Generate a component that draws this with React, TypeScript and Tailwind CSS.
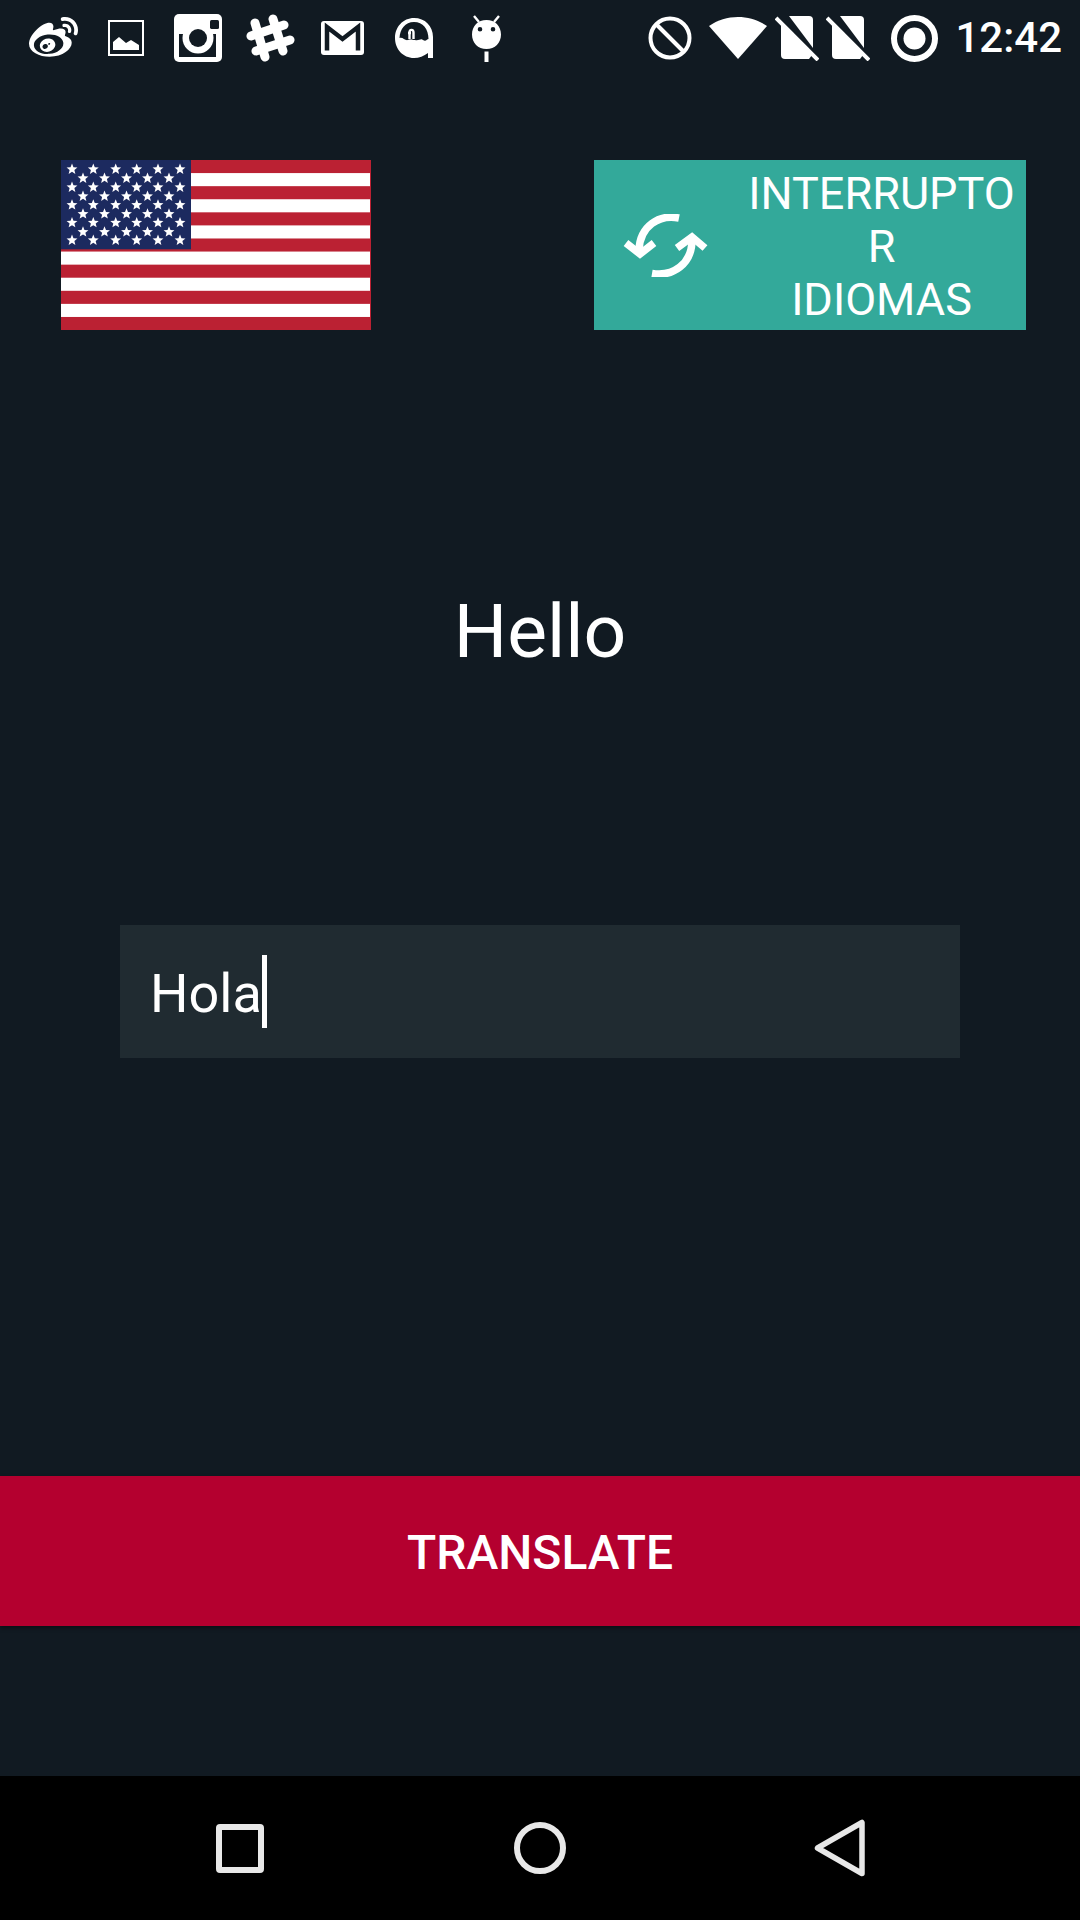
import { FaWeibo } from "react-icons/fa";

const FONT = "font-['Roboto','Liberation_Sans',sans-serif]";
const BG = "#111a22";

// Star rows of the canton, alternating 6 and 5 stars.
const STAR_ROWS = [9.3, 18.3, 27.3, 36.3, 45, 54, 62.7, 72, 80.3];
const STAR_LONG = [11, 32.3, 54.7, 75.7, 97, 119];
const STAR_SHORT = [22, 43.5, 65.5, 86.5, 108];

function starPoints(cx: number, cy: number, r: number) {
  const pts: string[] = [];
  for (let i = 0; i < 10; i++) {
    const rad = i % 2 === 0 ? r : r * 0.44;
    const a = (Math.PI / 5) * i - Math.PI / 2;
    pts.push(`${(cx + rad * Math.cos(a)).toFixed(2)},${(cy + rad * Math.sin(a)).toFixed(2)}`);
  }
  return pts.join(" ");
}

function UsFlag() {
  return (
    <svg width="310" height="170" viewBox="0 0 310 170" className="block">
      <defs>
        <filter id="soft" x="-5%" y="-5%" width="110%" height="110%">
          <feGaussianBlur stdDeviation="0.7" />
        </filter>
        <clipPath id="flagClip">
          <rect width="310" height="170" />
        </clipPath>
      </defs>
      <g clipPath="url(#flagClip)">
        <rect width="310" height="170" fill="#bb2133" />
        <g filter="url(#soft)">
          {[1, 3, 5, 7, 9, 11].map((i) => (
            <rect key={i} x="-4" y={i * 13.08} width="313" height="13.08" fill="#ffffff" />
          ))}
          <rect x="-4" y="-4" width="134" height="93.3" fill="#1f2a5e" />
          {STAR_ROWS.map((y, row) =>
            (row % 2 === 0 ? STAR_LONG : STAR_SHORT).map((x) => (
              <polygon key={`${row}-${x}`} points={starPoints(x, y, 5.7)} fill="#ffffff" />
            )),
          )}
        </g>
      </g>
    </svg>
  );
}

function SyncIcon() {
  return (
    <svg width="85" height="63" viewBox="0 0 85 63" fill="none" stroke="#ffffff" strokeWidth="7.5">
      <path d="M56 4C36 0 17 12 16 36" />
      <path d="M3 29L17 40L31 29" />
      <path d="M29 59.5C50 63 69 50 69 26" />
      <path d="M54 34L69 23L82 34" />
    </svg>
  );
}

function GalleryIcon() {
  return (
    <svg width="36" height="36" viewBox="0 0 36 36" fill="none">
      <rect x="1" y="1" width="34" height="34" stroke="#fff" strokeWidth="2" />
      <path d="M5 30V22L11 17L18 23L23 20L31 25V30Z" fill="#fff" />
    </svg>
  );
}

function InstagramIcon() {
  return (
    <svg width="48" height="48" viewBox="0 0 48 48">
      <rect width="48" height="48" rx="5" fill="#fff" />
      <rect x="36" y="6" width="9" height="9" rx="1.5" fill={BG} />
      <rect x="5" y="20" width="37" height="23" fill={BG} />
      <circle cx="24" cy="24" r="15.5" fill="#fff" />
      <circle cx="24" cy="24" r="9" fill={BG} />
    </svg>
  );
}

function SlackIcon() {
  return (
    <svg width="49" height="48" viewBox="0 0 49 48" stroke="#fff" strokeWidth="9" strokeLinecap="round">
      <path d="M9 9L19 43M27 5L37 37" />
      <path d="M5 22L38 11M10 37L44 26" />
    </svg>
  );
}

function GmailIcon() {
  return (
    <svg width="43" height="34" viewBox="0 0 43 34">
      <rect width="43" height="34" rx="3" fill="#fff" />
      <path d="M6 29.5V6L21.5 18L37 6V29.5" fill="none" stroke={BG} strokeWidth="4.5" />
    </svg>
  );
}

function GhostIcon() {
  return (
    <svg width="38" height="40" viewBox="0 0 38 40">
      <path
        fill="#fff"
        fillRule="evenodd"
        d="M19 0C30 0 38 8 38 19V40H33V35C29 38 24 40 19 40C8 40 0 31 0 20C0 9 8 0 19 0ZM19 4C10 4 5 11 4.5 20C8 19 10 23 13 22C16 21 17 22 20 22C24 23 26 20 28 22C31 24 32 21 33.5 21C33.5 11 28 4 19 4Z"
      />
      <path d="M14.5 21V14.5C14.5 11 18.5 11 18.5 14.5V21M13 15H16" fill="none" stroke="#fff" strokeWidth="2.4" />
    </svg>
  );
}

function AndroidIcon() {
  return (
    <svg width="31" height="47" viewBox="0 0 31 47">
      <path d="M3 1L8 7M28 1L23 7" stroke="#fff" strokeWidth="2.4" />
      <path
        fill="#fff"
        fillRule="evenodd"
        d="M15.5 5C24 5 30 11 30 19.5C30 28 24 34 15.5 34C7 34 1 28 1 19.5C1 11 7 5 15.5 5ZM9 12A2.3 2.3 0 1 0 9 16.6A2.3 2.3 0 1 0 9 12ZM22 12A2.3 2.3 0 1 0 22 16.6A2.3 2.3 0 1 0 22 12Z"
      />
      <rect x="13.5" y="36.5" width="4" height="10.5" fill="#fff" />
    </svg>
  );
}

function BlockedIcon() {
  return (
    <svg width="44" height="44" viewBox="0 0 44 44" fill="none" stroke="#fff" strokeWidth="4">
      <circle cx="22" cy="22" r="19.5" />
      <path d="M8 8L36 36" />
    </svg>
  );
}

function WifiIcon() {
  return (
    <svg width="58" height="42" viewBox="0 0 58 42">
      <path fill="#fff" d="M0 9C17 -3 41 -3 58 9L29 42Z" />
    </svg>
  );
}

function SimOffIcon() {
  return (
    <svg width="44" height="46" viewBox="0 0 44 46">
      <path fill="#fff" d="M14 1H34A4 4 0 0 1 38 5V33Z" />
      <path fill="#fff" d="M6 9L37 40L34 44H10A4 4 0 0 1 6 40Z" />
      <path d="M1 3L43 45" stroke="#fff" strokeWidth="4" />
    </svg>
  );
}

function TargetIcon() {
  return (
    <svg width="47" height="47" viewBox="0 0 47 47" fill="none">
      <circle cx="23.5" cy="23.5" r="20.5" stroke="#fff" strokeWidth="6" />
      <circle cx="23.5" cy="23.5" r="11" fill="#fff" />
    </svg>
  );
}

function StatusBar() {
  return (
    <div className="flex h-[76px] shrink-0 items-center justify-between pl-[29px] pr-[18px]">
      <div className="flex items-center">
        <FaWeibo className="h-[49px] w-[49px] text-white" />
        <div className="ml-[30px]"><GalleryIcon /></div>
        <div className="ml-[30px]"><InstagramIcon /></div>
        <div className="ml-[24px]"><SlackIcon /></div>
        <div className="ml-[26px]"><GmailIcon /></div>
        <div className="ml-[31px]"><GhostIcon /></div>
        <div className="ml-[38px]"><AndroidIcon /></div>
      </div>
      <div className="flex items-center">
        <BlockedIcon />
        <div className="ml-[17px]"><WifiIcon /></div>
        <div className="ml-[8px]"><SimOffIcon /></div>
        <div className="ml-[7px]"><SimOffIcon /></div>
        <div className="ml-[21px]"><TargetIcon /></div>
        <span className="ml-[17px] text-[42px] font-medium leading-none text-white">12:42</span>
      </div>
    </div>
  );
}

function NavBar() {
  return (
    <div className="flex h-[144px] shrink-0 items-center bg-black pl-[216px]">
      <div className="h-[49px] w-[48px] rounded-[4px] border-[6px] border-[#e8e8e8]" />
      <div className="ml-[250px] h-[52px] w-[52px] rounded-full border-[6px] border-[#e8e8e8]" />
      <svg width="52" height="58" viewBox="0 0 52 58" fill="none" className="ml-[248px]">
        <path d="M48 3.5V54.5L3.5 29Z" stroke="#e8e8e8" strokeWidth="5.5" strokeLinejoin="round" />
      </svg>
    </div>
  );
}

export default function App() {
  return (
    <div className={`${FONT} flex h-[1920px] w-[1080px] flex-col bg-[#111a22] text-white`}>
      <StatusBar />

      <div className="flex flex-1 flex-col">
        {/* Flag + language switch */}
        <div className="mt-[84px] flex items-start justify-between pl-[61px] pr-[54px]">
          <UsFlag />
          <button
            type="button"
            className="flex h-[170px] w-[432px] items-center bg-[#33a99a] pl-[29px]"
          >
            <SyncIcon />
            <span className="ml-[33px] w-[281px] pt-[2px] text-center text-[45px] leading-[53px] text-white">
              <span className="block">INTERRUPTO</span>
              <span className="block">R</span>
              <span className="block">IDIOMAS</span>
            </span>
          </button>
        </div>

        <div className="mt-[256px] text-center text-[75px] leading-[90px]">Hello</div>

        {/* Input */}
        <div className="mx-[120px] mt-[249px] flex h-[133px] items-center bg-[#202b31] pl-[30px]">
          <span className="pt-[4px] text-[54px] leading-none">Hola</span>
          <span className="h-[73px] w-[5px] bg-white" />
        </div>

        <div className="mt-[418px] flex h-[150px] items-center justify-center bg-[#b4002f] pt-[4px] text-[48px] font-medium shadow-[0_2px_4px_rgba(0,0,0,0.4)]">
          TRANSLATE
        </div>
      </div>

      <NavBar />
    </div>
  );
}
